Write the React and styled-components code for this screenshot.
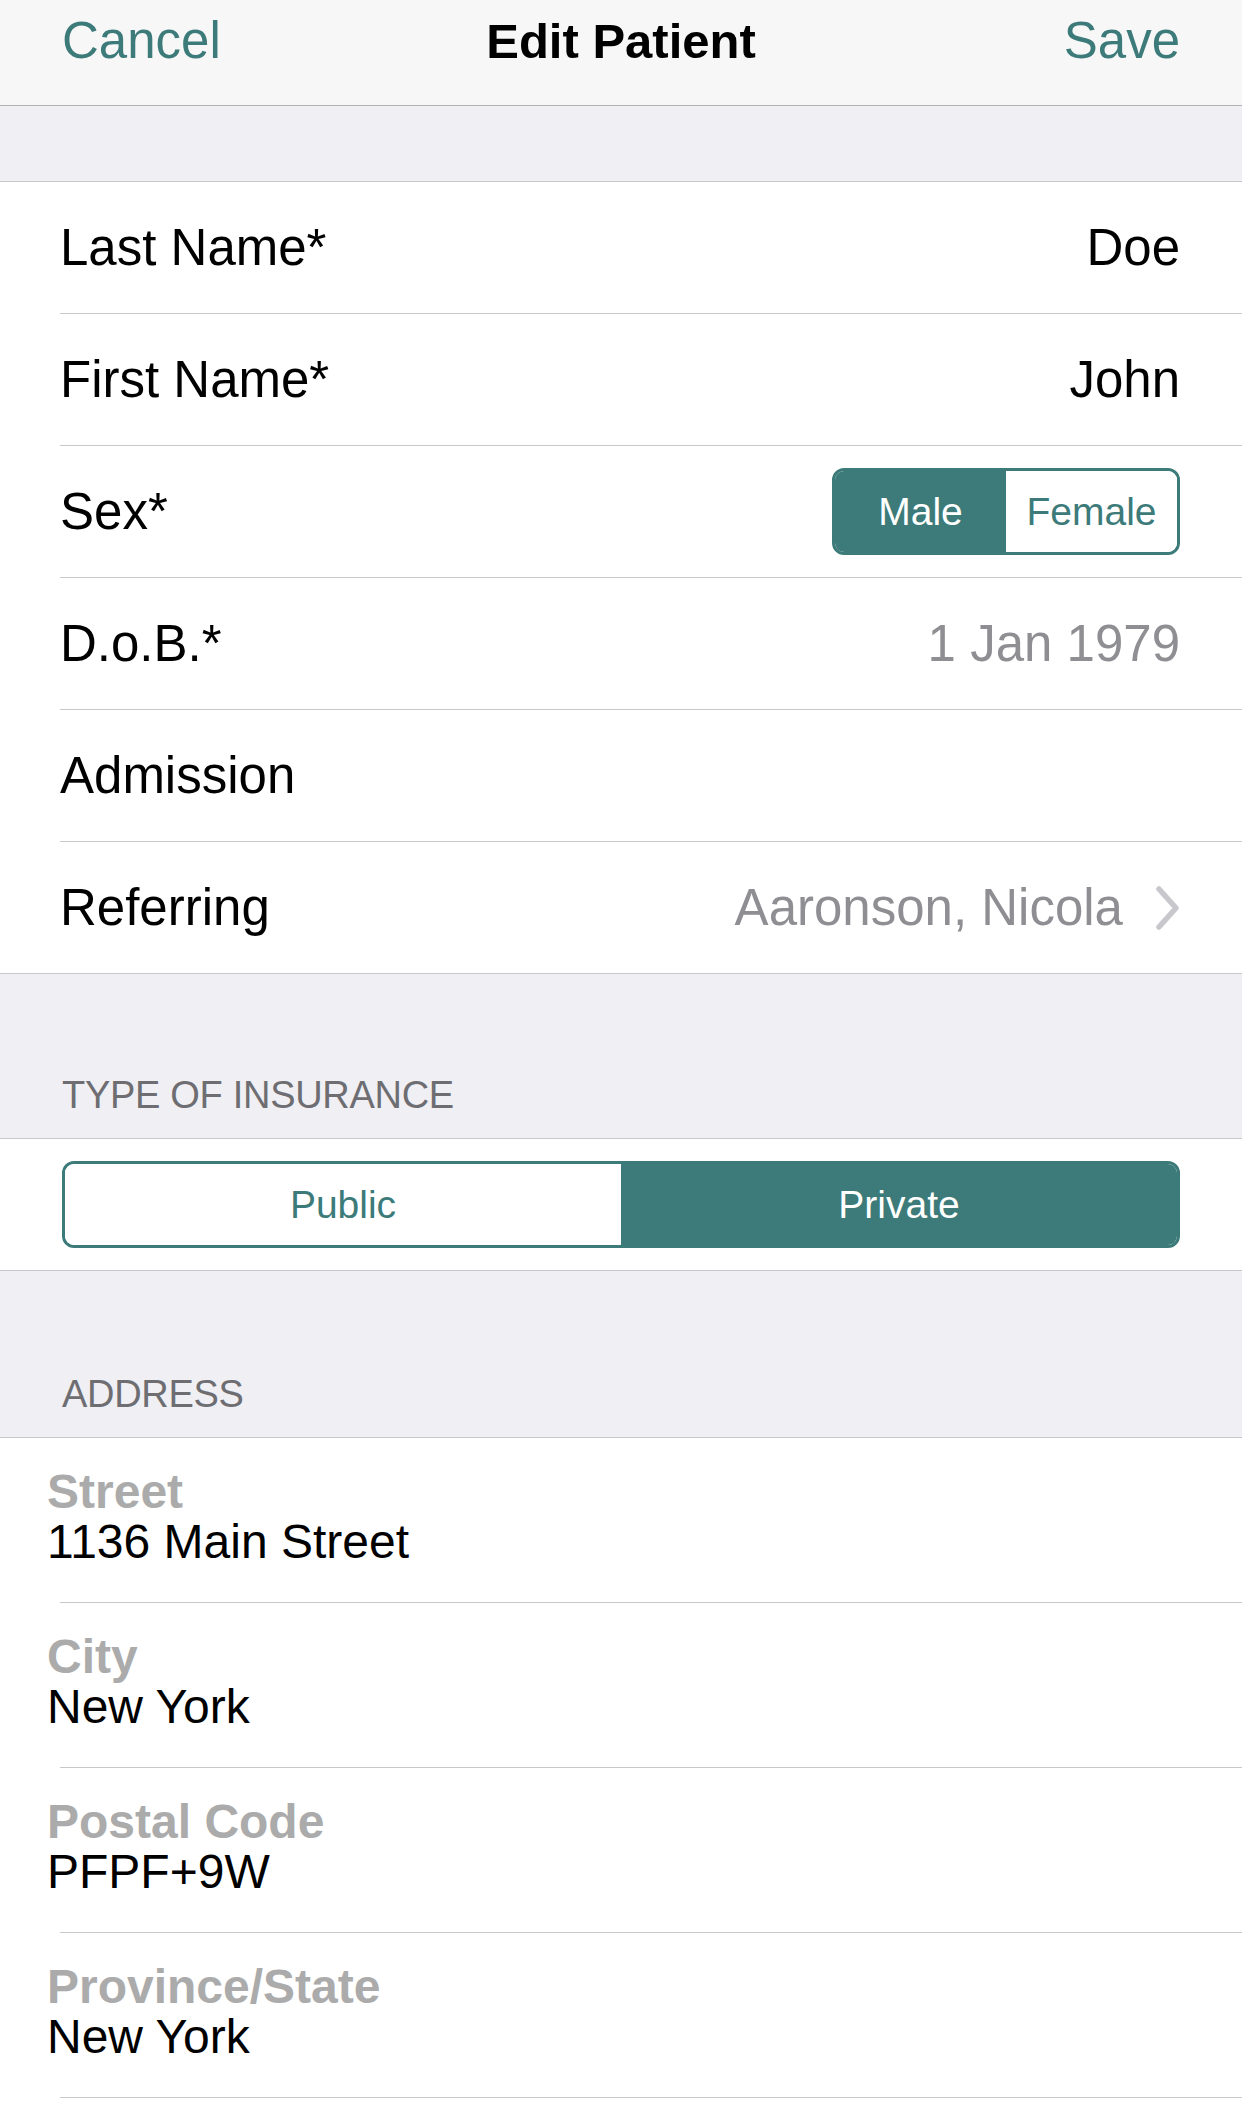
import React from 'react'
import styled, { createGlobalStyle } from 'styled-components'

const teal = '#3c7b79';

const GlobalStyle = createGlobalStyle`
  body {
    margin: 0;
    background: #efeff4;
    font-family: "Liberation Sans", Arial, sans-serif;
    color: #000;
  }
`;

const Page = styled.div`
  width: 1242px;
  min-height: 2108px;
  display: flex;
  flex-direction: column;
  background: #efeff4;
`;

const NavBar = styled.div`
  display: grid;
  grid-template-columns: 1fr auto 1fr;
  align-items: center;
  height: 106px;
  padding: 11px 62px 35px;
  box-sizing: border-box;
  background: #f7f7f8;
  border-bottom: 1px solid #b2b2b2;
`;

const NavButton = styled.span`
  font-size: 51px;
  line-height: 60px;
  color: ${teal};
  justify-self: ${p => (p.$right ? 'end' : 'start')};
`;

const NavTitle = styled.span`
  font-size: 49px;
  line-height: 60px;
  font-weight: 700;
`;

const Gap = styled.div`
  height: ${p => p.$h}px;
  display: flex;
  align-items: flex-end;
  padding: 0 62px 20px;
  box-sizing: border-box;
  border-bottom: 1px solid #c8c7cc;
`;

const SectionTitle = styled.span`
  font-size: 38px;
  line-height: 46px;
  letter-spacing: -0.3px;
  color: #6d6d72;
`;

const Group = styled.div`
  background: #fff;
  border-bottom: ${p => (p.$open ? 'none' : '1px solid #c8c7cc')};
  padding-bottom: ${p => (p.$open ? '20px' : '0')};
  flex: ${p => (p.$open ? 1 : 'none')};
`;

const Row = styled.div`
  display: flex;
  align-items: center;
  justify-content: space-between;
  height: 131px;
  padding: 0 62px 0 60px;
`;

const Divider = styled.div`
  height: 1px;
  margin-left: 60px;
  background: #c8c7cc;
`;

const Label = styled.span`
  font-size: 51px;
`;

const Value = styled.span`
  font-size: 51px;
  color: ${p => (p.$muted ? '#8e8e93' : '#000')};
`;

const Link = styled.span`
  display: flex;
  align-items: center;
  gap: 33px;
`;

const Segmented = styled.div`
  display: flex;
  width: ${p => p.$w}px;
  height: 87px;
  box-sizing: border-box;
  border: 3px solid ${teal};
  border-radius: 12px;
  overflow: hidden;
`;

const Segment = styled.div`
  flex: 1;
  display: flex;
  align-items: center;
  justify-content: center;
  font-size: 39px;
  background: ${p => (p.$active ? teal : '#fff')};
  color: ${p => (p.$active ? '#fff' : teal)};
`;

const FullRow = styled.div`
  height: 131px;
  display: flex;
  align-items: center;
  padding: 0 62px;
`;

const AddressRow = styled.div`
  display: flex;
  flex-direction: column;
  padding: 29px 47px 35px;
`;

const FieldLabel = styled.span`
  font-size: 48px;
  line-height: 50px;
  font-weight: 700;
  color: #ababab;
`;

const FieldValue = styled.span`
  font-size: 48px;
  line-height: 50px;
`;

const Chevron = () => (
  <svg width="24" height="44" viewBox="0 0 24 44">
    <path d="M3 3 L20 22 L3 41" fill="none" stroke="#c7c7cc" strokeWidth="5.5" strokeLinecap="round" strokeLinejoin="round" />
  </svg>
);

const rows = [
  ['Last Name*', <Value>Doe</Value>],
  ['First Name*', <Value>John</Value>],
  ['Sex*', (
    <Segmented $w={348}>
      <Segment $active>Male</Segment>
      <Segment>Female</Segment>
    </Segmented>
  )],
  ['D.o.B.*', <Value $muted>1 Jan 1979</Value>],
  ['Admission', null],
  ['Referring', <Link><Value $muted>Aaronson, Nicola</Value><Chevron /></Link>],
];

const address = [
  ['Street', '1136 Main Street'],
  ['City', 'New York'],
  ['Postal Code', 'PFPF+9W'],
  ['Province/State', 'New York'],
];

const App = () => {
  return (
    <Page>
      <GlobalStyle />
      <NavBar>
        <NavButton>Cancel</NavButton>
        <NavTitle>Edit Patient</NavTitle>
        <NavButton $right>Save</NavButton>
      </NavBar>
      <Gap $h={76} />
      <Group>
        {rows.map(([label, value], i) => (
          <React.Fragment key={label}>
            {i > 0 && <Divider />}
            <Row>
              <Label>{label}</Label>
              {value}
            </Row>
          </React.Fragment>
        ))}
      </Group>
      <Gap $h={165}>
        <SectionTitle>TYPE OF INSURANCE</SectionTitle>
      </Gap>
      <Group>
        <FullRow>
          <Segmented $w={1118}>
            <Segment>Public</Segment>
            <Segment $active>Private</Segment>
          </Segmented>
        </FullRow>
      </Group>
      <Gap $h={167}>
        <SectionTitle>ADDRESS</SectionTitle>
      </Gap>
      <Group $open>
        {address.map(([label, value]) => (
          <React.Fragment key={label}>
            <AddressRow>
              <FieldLabel>{label}</FieldLabel>
              <FieldValue>{value}</FieldValue>
            </AddressRow>
            <Divider />
          </React.Fragment>
        ))}
      </Group>
    </Page>
  )
}

export default App
